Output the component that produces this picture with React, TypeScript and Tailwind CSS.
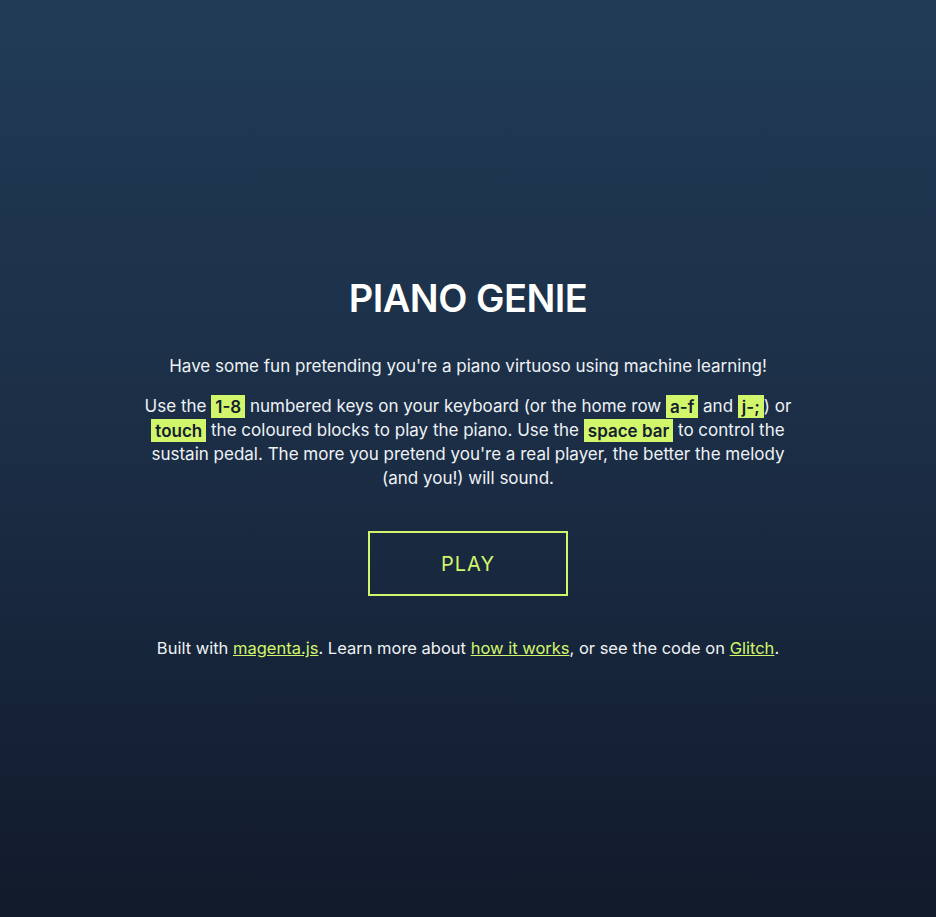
const Key = ({ children }: { children: React.ReactNode }) => (
  <span className="bg-[#d2f66b] text-[#14202f] font-semibold px-[4px] py-[1.5px]">{children}</span>
);

export default function App() {
  return (
    <div className="min-h-screen w-full bg-gradient-to-b from-[#213b56] via-[#1b2d45] to-[#111a2b] text-[#eef2f6] font-['Inter',sans-serif] flex flex-col items-center">
      <div className="w-[700px] pt-[274px] flex flex-col items-center text-center">
        <h1 className="text-[38px] leading-[48px] font-semibold text-white tracking-[-0.5px]">PIANO GENIE</h1>
        <p className="mt-[32px] text-[17px] leading-[24px]">
          Have some fun pretending you're a piano virtuoso using machine learning!
        </p>
        <p className="mt-[16px] text-[17px] leading-[24px]">
          Use the <Key>1-8</Key> numbered keys on your keyboard (or the home row <Key>a-f</Key> and <Key>j-;</Key>) or
          <br />
          <Key>touch</Key> the coloured blocks to play the piano. Use the <Key>space bar</Key> to control the
          <br />
          sustain pedal. The more you pretend you're a real player, the better the melody
          <br />
          (and you!) will sound.
        </p>
        <button className="mt-[41px] w-[200px] h-[65px] border-2 border-[#d2f66b] text-[#d2f66b] text-[20px] tracking-[1px] font-normal">
          PLAY
        </button>
        <p className="mt-[40px] text-[16.5px] leading-[24px]">
          Built with <a href="#" className="text-[#d2f66b] underline">magenta.js</a>. Learn more about{' '}
          <a href="#" className="text-[#d2f66b] underline">how it works</a>, or see the code on{' '}
          <a href="#" className="text-[#d2f66b] underline">Glitch</a>.
        </p>
      </div>
    </div>
  );
}
